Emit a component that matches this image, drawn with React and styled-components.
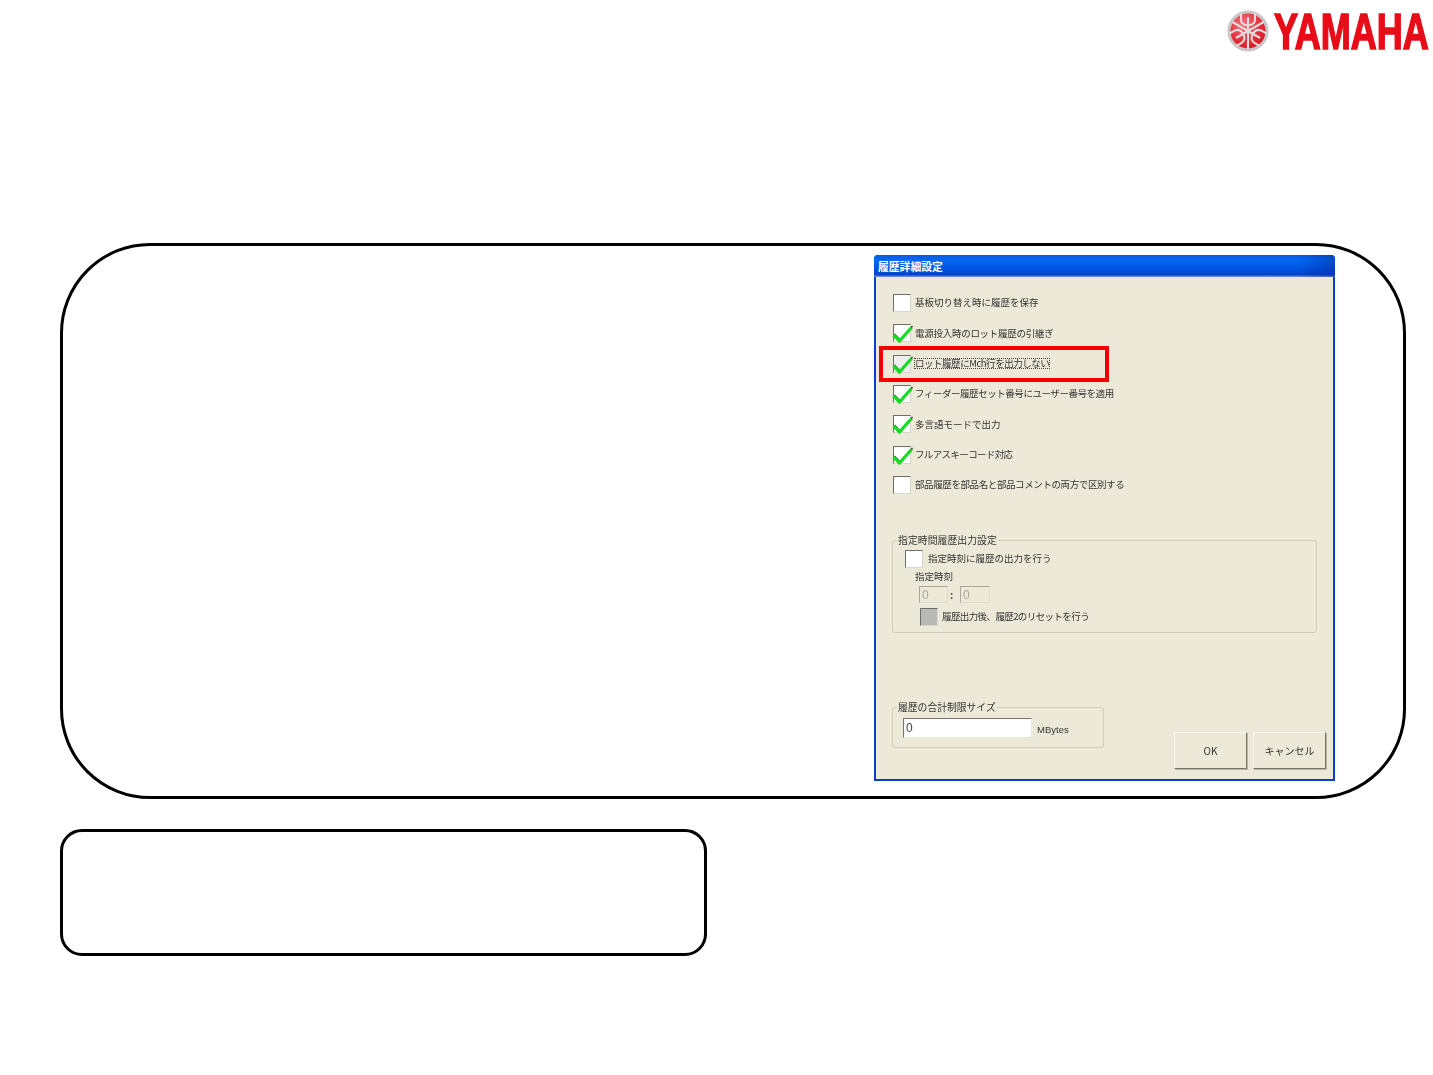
import React from "react";
import styled, { createGlobalStyle } from "styled-components";

const GlobalStyle = createGlobalStyle`
  html, body {
    margin: 0;
    padding: 0;
    background: white;
  }
`;

const Page = styled.div`
  width: 1433px;
  height: 1075px;
  overflow: hidden;
  font-family: "Liberation Sans", "Noto Sans CJK JP", sans-serif;
`;

const Header = styled.header`
  height: 243px;
  display: flex;
  justify-content: flex-end;
  align-items: flex-start;
  padding: 9px 5px 0 0;
  box-sizing: border-box;
`;

const Logo = styled.div`
  display: flex;
  align-items: flex-start;
  height: 46px;
  width: 201px;
`;

const LogoMark = styled.svg`
  flex: none;
  display: block;
  width: 44px;
  height: 44px;
  margin-left: -1px;
`;

const Wordmark = styled.span`
  flex: none;
  margin-left: 4px;
  font-size: 50px;
  font-weight: 700;
  line-height: 46px;
  color: #e60d18;
  -webkit-text-stroke: 1.6px #e60d18;
  transform: scaleX(0.72);
  transform-origin: left center;
`;

const MainPanel = styled.section`
  box-sizing: border-box;
  width: 1346px;
  height: 556px;
  margin-left: 60px;
  padding: 9px 68px 0 0;
  border: 3px solid #000;
  border-radius: 90px;
  display: flex;
  justify-content: flex-end;
`;

const NotePanel = styled.section`
  box-sizing: border-box;
  width: 647px;
  height: 127px;
  margin: 30px 0 0 60px;
  border: 3px solid #000;
  border-radius: 22px;
`;

const Dialog = styled.div`
  box-sizing: border-box;
  width: 461px;
  height: 526px;
  display: flex;
  flex-direction: column;
  background: #0a3ec8;
  border-radius: 4px 4px 0 0;
  padding: 0 2px 2px;
  font-family: "Noto Sans CJK JP", "Liberation Sans", sans-serif;
  color: #333;
`;

const TitleBar = styled.div`
  flex: none;
  height: 22px;
  margin: 0 -2px;
  padding-left: 4px;
  box-sizing: border-box;
  display: flex;
  align-items: center;
  border-radius: 4px 4px 0 0;
  background:
    linear-gradient(90deg, transparent 92%, rgba(0, 30, 140, 0.35) 99%),
    linear-gradient(180deg, #0a5be2 0%, #0468f2 25%, #0055e5 60%, #0343c8 90%, #7f9fe0 100%);
  color: white;
  font-size: 10.8px;
  font-weight: 700;
  line-height: 1;
`;

const DialogBody = styled.div`
  flex: 1;
  position: relative;
  background: #ece9d8;
  padding: 17px 5px 0 16px;
  display: flex;
  flex-direction: column;
  filter: blur(0.3px);
`;

const CheckList = styled.div`
  height: 200px;
  display: flex;
  flex-direction: column;
  justify-content: space-between;
  padding-left: 1px;
`;

const CheckRow = styled.div`
  display: flex;
  align-items: center;
  height: 18px;
  font-size: 9.5px;
  line-height: 1;
  margin-left: ${(p) => p.$indent || 0}px;
  margin-top: ${(p) => p.$top || 0}px;
`;

const CheckLabel = styled.span`
  margin-left: ${(p) => p.$gap || 4}px;
  white-space: nowrap;
  letter-spacing: ${(p) => p.$spacing || 0}px;
  outline: ${(p) => (p.$focus ? "1px dotted #444" : "none")};
`;

const BoxWrap = styled.span`
  position: relative;
  flex: none;
  box-sizing: border-box;
  width: 18px;
  height: 18px;
  background: ${(p) => (p.$disabled ? "#b9b9b6" : p.$focus ? "#efefef" : "white")};
  border: 1px solid;
  border-color: #6e6e66 #d8d6c8 #d8d6c8 #6e6e66;
`;

const CheckMark = styled.svg`
  position: absolute;
  left: -2px;
  top: -5px;
  width: 22px;
  height: 24px;
  overflow: visible;
`;

const HighlightFrame = styled.div`
  position: absolute;
  left: 3px;
  top: 69px;
  width: 230px;
  height: 36px;
  box-sizing: border-box;
  border: 4px solid #f40000;
`;

const GroupBox = styled.fieldset`
  flex: none;
  box-sizing: border-box;
  margin: ${(p) => p.$margin};
  padding: ${(p) => p.$padding};
  width: ${(p) => p.$width}px;
  height: ${(p) => p.$height}px;
  border: 1px solid #cfccb9;
  border-radius: 3px;
  min-width: 0;
`;

const GroupTitle = styled.legend`
  margin-left: ${(p) => p.$offset}px;
  padding: 0 1px;
  font-size: ${(p) => p.$size}px;
  line-height: 12px;
  white-space: nowrap;
`;

const SubLabel = styled.div`
  margin: 2px 0 4px 10px;
  font-size: 9.5px;
  line-height: 12px;
`;

const TimeRow = styled.div`
  display: flex;
  align-items: center;
  margin-left: 14px;
  height: 17px;
  font-size: 10px;
`;

const Colon = styled.span`
  width: 12px;
  padding-left: 2px;
  box-sizing: border-box;
  font-weight: 700;
  color: #555;
`;

const TextInput = styled.div`
  box-sizing: border-box;
  width: ${(p) => p.$width}px;
  height: ${(p) => p.$height}px;
  padding-left: 2px;
  display: flex;
  align-items: center;
  font-family: "Liberation Sans", sans-serif;
  font-size: 12px;
  background: ${(p) => (p.$disabled ? "#ece9d8" : "white")};
  color: ${(p) => (p.$disabled ? "#a8a89c" : "#444")};
  border: 1px solid;
  border-color: ${(p) =>
    p.$disabled ? "#a8a698 #dedbc8 #dedbc8 #a8a698" : "#77756a #e8e6d8 #e8e6d8 #77756a"};
`;

const Footer = styled.div`
  display: flex;
  align-items: flex-start;
  margin-top: 68px;
`;

const LimitRow = styled.div`
  display: flex;
  align-items: center;
`;

const Unit = styled.span`
  margin: 3px 0 0 5px;
  font-family: "Liberation Sans", sans-serif;
  font-size: 9.5px;
`;

const Buttons = styled.div`
  display: flex;
  gap: 6px;
  margin: 31px 0 0 70px;
`;

const Button = styled.div`
  box-sizing: border-box;
  width: 73px;
  height: 37px;
  display: flex;
  align-items: center;
  justify-content: center;
  font-size: 10px;
  background: #ece9d8;
  border: 1px solid;
  border-color: #f8f7f0 #77766a #77766a #f8f7f0;
  box-shadow: 1px 1px 0 #b8b6a6;
`;

// fork head points outward from the centre, the stem runs on past it to the far side
const Fork = ({ angle }) => (
  <g transform={`rotate(${angle} 22 22)`}>
    <path
      d="M22 40 L22 8 M15 4.5 L15 11 Q15.5 16 22 16.5 Q28.5 16 29 11 L29 4.5"
      fill="none"
      stroke="#e6dcdc"
      strokeWidth="2.1"
    />
  </g>
);

const YamahaLogo = () => (
  <Logo>
    <LogoMark viewBox="0 0 44 44">
      <defs>
        <radialGradient id="ringFill" cx="0.38" cy="0.32" r="0.85">
          <stop offset="0" stopColor="#f2747c" />
          <stop offset="0.55" stopColor="#e42a36" />
          <stop offset="1" stopColor="#c8101e" />
        </radialGradient>
      </defs>
      <circle cx="22" cy="22" r="19" fill="url(#ringFill)" stroke="#c9c4c5" strokeWidth="3" />
      <Fork angle={0} />
      <Fork angle={120} />
      <Fork angle={240} />
    </LogoMark>
    <Wordmark>YAMAHA</Wordmark>
  </Logo>
);

const CheckBox = ({ checked, focus, disabled }) => (
  <BoxWrap $focus={focus} $disabled={disabled}>
    {checked && (
      <CheckMark viewBox="0 0 22 24">
        <path d="M1.5 15 L7.5 21.5 L19.5 7" fill="none" stroke="#30402f" strokeWidth="1.4" transform="translate(1 -1)" />
        <path d="M1.5 15 L7.5 21 L19.5 7.5" fill="none" stroke="#14dc20" strokeWidth="3.2" />
      </CheckMark>
    )}
  </BoxWrap>
);

const options = [
  { label: "基板切り替え時に履歴を保存", checked: false },
  { label: "電源投入時のロット履歴の引継ぎ", checked: true, spacing: -0.27 },
  { label: "ロット履歴にMch行を出力しない", checked: true, focus: true, spacing: -0.47 },
  { label: "フィーダー履歴セット番号にユーザー番号を適用", checked: true, spacing: -0.45 },
  { label: "多言語モードで出力", checked: true },
  { label: "フルアスキーコード対応", checked: true, spacing: -0.64 },
  { label: "部品履歴を部品名と部品コメントの両方で区別する", checked: false, spacing: -0.4 },
];

export default function App() {
  return (
    <Page>
      <GlobalStyle />
      <Header>
        <YamahaLogo />
      </Header>
      <MainPanel>
        <Dialog>
          <TitleBar>履歴詳細設定</TitleBar>
          <DialogBody>
            <CheckList>
              {options.map((o) => (
                <CheckRow key={o.label}>
                  <CheckBox checked={o.checked} focus={o.focus} />
                  <CheckLabel $spacing={o.spacing} $focus={o.focus}>{o.label}</CheckLabel>
                </CheckRow>
              ))}
            </CheckList>
            <HighlightFrame />
            <GroupBox $margin="40px 0 0 0" $padding="4px 0 0 12px" $width={425} $height={99}>
              <GroupTitle $offset={-8} $size={9.9}>指定時間履歴出力設定</GroupTitle>
              <CheckRow>
                <CheckBox />
                <CheckLabel $gap={5}>指定時刻に履歴の出力を行う</CheckLabel>
              </CheckRow>
              <SubLabel>指定時刻</SubLabel>
              <TimeRow>
                <TextInput $disabled $width={29} $height={17}>0</TextInput>
                <Colon>:</Colon>
                <TextInput $disabled $width={30} $height={17}>0</TextInput>
              </TimeRow>
              <CheckRow $indent={15} $top={5}>
                <CheckBox disabled />
                <CheckLabel $gap={4} $spacing={-0.6}>履歴出力後、履歴2のリセットを行う</CheckLabel>
              </CheckRow>
            </GroupBox>
            <Footer>
              <GroupBox $margin="0" $padding="5px 0 0 10px" $width={212} $height={47}>
                <GroupTitle $offset={-6} $size={9.8}>履歴の合計制限サイズ</GroupTitle>
                <LimitRow>
                  <TextInput $width={129} $height={20}>0</TextInput>
                  <Unit>MBytes</Unit>
                </LimitRow>
              </GroupBox>
              <Buttons>
                <Button>OK</Button>
                <Button>キャンセル</Button>
              </Buttons>
            </Footer>
          </DialogBody>
        </Dialog>
      </MainPanel>
      <NotePanel />
    </Page>
  );
}
